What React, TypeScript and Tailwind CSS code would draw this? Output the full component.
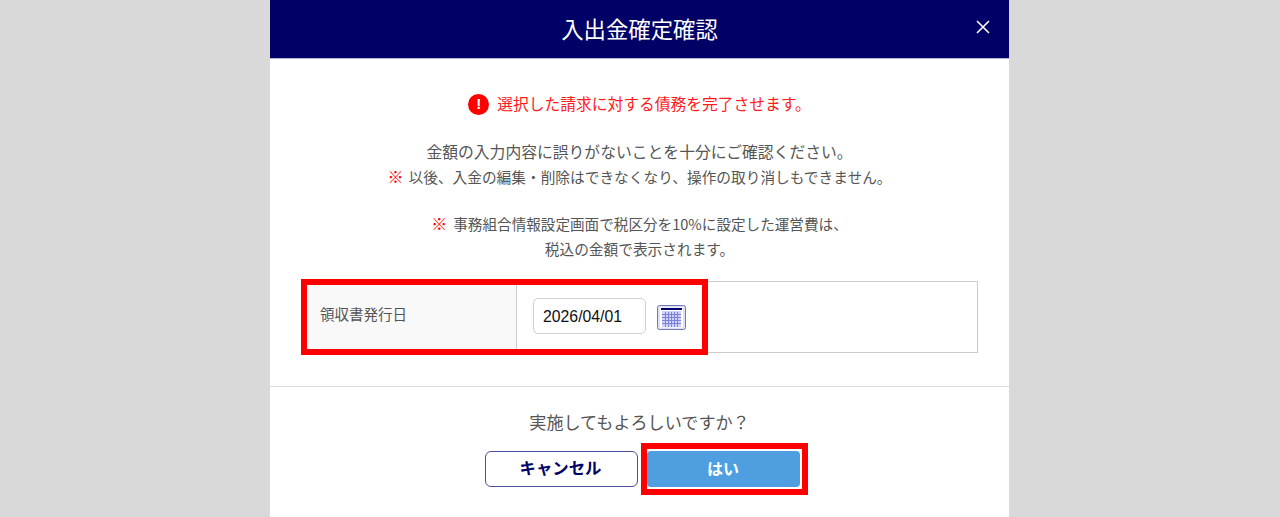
import React from "react";

const jp = "font-['Noto_Sans_CJK_JP','Liberation_Sans',sans-serif]";

function CalendarIcon() {
	const lines = [];
	for (let i = 1; i < 6; i++) {
		lines.push(<line key={"v" + i} x1={5.5 + i * 3} y1="7" x2={5.5 + i * 3} y2="22" stroke="#7c82dc" strokeWidth="1" />);
	}
	for (let i = 1; i < 5; i++) {
		lines.push(<line key={"h" + i} x1="5" y1={6.5 + i * 3} x2="24" y2={6.5 + i * 3} stroke="#7c82dc" strokeWidth="1" />);
	}
	return (
		<svg width="29" height="25" viewBox="0 0 29 25" className="ml-[11px] mt-[2px] shrink-0">
			<rect x="0.5" y="0.5" width="28" height="24" rx="2" fill="#dfe0f2" stroke="#7478b8" />
			<rect x="3" y="2.5" width="23" height="20" fill="#ffffff" />
			<rect x="4" y="3" width="21" height="2" fill="#000066" />
			<rect x="5" y="6" width="19" height="16" fill="#d0d3f8" />
			{lines}
		</svg>
	);
}

export default function App() {
	return (
		<div className={`w-[1280px] h-[517px] overflow-hidden bg-[#d9d9d9] pl-[270px] ${jp}`}>
			<div className="w-[739px] h-[517px] bg-white flex flex-col">
				<header className="relative h-[59px] shrink-0 flex items-center justify-center bg-[#000066] border-b border-[#b4b4d6] text-white text-[22.4px]">
					入出金確定確認
					<svg width="14" height="14" viewBox="0 0 14 14" className="absolute right-[19px] top-[20px]">
						<path d="M1 1 L13 13 M13 1 L1 13" stroke="#ffffff" strokeWidth="1.6" />
					</svg>
				</header>

				<div className="pt-[34px] flex items-center justify-center gap-[8px] text-[15.75px] leading-[22px] text-[#ff1a1a]">
					<span className="w-[21px] h-[21px] rounded-full bg-[#ff0000] text-white flex items-center justify-center text-[15px] font-bold font-['Liberation_Sans',sans-serif]">!</span>
					選択した請求に対する債務を完了させます。
				</div>

				<div className="mt-[25px] text-center leading-[25px] text-[#555555]">
					<p className="text-[15.8px] leading-[24px]">金額の入力内容に誤りがないことを十分にご確認ください。</p>
					<p className="text-[14.7px]"><span className="text-[#ff0000] font-bold text-[16px] mr-[5px]">※</span>以後、入金の編集・削除はできなくなり、操作の取り消しもできません。</p>
					<p className="mt-[22px] text-[14.6px]"><span className="text-[#ff0000] font-bold text-[16px] mr-[6px]">※</span>事務組合情報設定画面で税区分を10%に設定した運営費は、</p>
					<p className="text-[14.7px]">税込の金額で表示されます。</p>
				</div>

				<div className="relative mx-[31px] mt-[20px] h-[72px] flex border border-[#cccccc]">
					<div className="w-[215px] bg-[#f9f9f9] border-r border-[#cccccc] flex items-center pl-[18px] pb-[7px] text-[14.5px] text-[#555555]">
						領収書発行日
					</div>
					<div className="flex items-center pl-[16px] pb-[2px]">
						<div className="w-[113px] h-[36px] pt-[1px] rounded-[5px] border border-[#d0d0d0] flex items-center pl-[9px] text-[15.8px] text-[#111111] font-['Liberation_Sans',sans-serif]">
							2026/04/01
						</div>
						<CalendarIcon />
					</div>
					<div className="absolute left-[-1px] top-[-3px] w-[407px] h-[76px] border-[6px] border-[#ff0000]" />
				</div>

				<div className="mt-[33px] border-t border-[#dddddd] pt-[22px] flex flex-col items-center">
					<p className="text-[17.1px] leading-[26px] text-[#555555]">実施してもよろしいですか？</p>
					<div className="mt-[16px] ml-[6px] flex gap-[9px]">
						<button className="w-[153px] h-[36px] pb-[3px] pr-[2px] rounded-[6px] border border-[#4c4ca0] bg-white text-[#000066] text-[16.4px] font-bold">キャンセル</button>
						<div className="relative">
							<button className="w-[153px] h-[36px] pb-[3px] pr-[1px] rounded-[4px] bg-[#4f9fe0] text-white text-[16px] font-bold">はい</button>
							<div className="absolute left-[-6px] top-[-8px] w-[167px] h-[52px] border-[6px] border-[#ff0000]" />
						</div>
					</div>
				</div>
			</div>
		</div>
	);
}
